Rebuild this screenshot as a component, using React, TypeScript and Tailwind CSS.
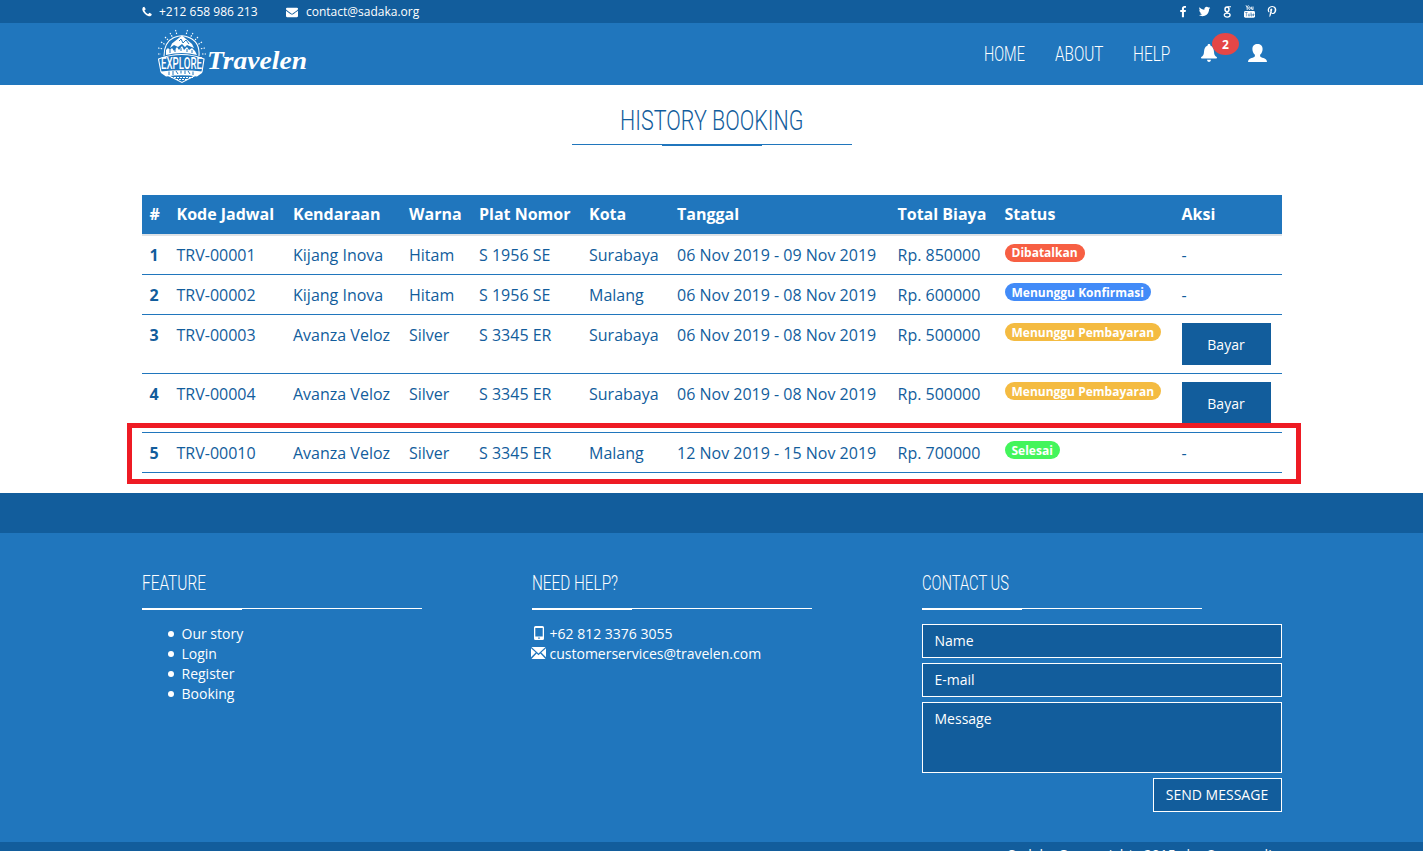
import type { ReactNode } from "react";

type Booking = {
  code: string;
  car: string;
  color: string;
  plate: string;
  city: string;
  date: string;
  total: string;
  status: keyof typeof badgeColor;
  payable?: boolean;
};

const badgeColor = {
  Dibatalkan: "bg-[#f75f43] w-20",
  "Menunggu Konfirmasi": "bg-[#428bf8] w-[146px]",
  "Menunggu Pembayaran": "bg-[#f4bb41] w-[156px]",
  Selesai: "bg-[#43f55b] w-[55px]",
};

const bookings: Booking[] = [
  { code: "TRV-00001", car: "Kijang Inova", color: "Hitam", plate: "S 1956 SE", city: "Surabaya", date: "06 Nov 2019 - 09 Nov 2019", total: "Rp. 850000", status: "Dibatalkan" },
  { code: "TRV-00002", car: "Kijang Inova", color: "Hitam", plate: "S 1956 SE", city: "Malang", date: "06 Nov 2019 - 08 Nov 2019", total: "Rp. 600000", status: "Menunggu Konfirmasi" },
  { code: "TRV-00003", car: "Avanza Veloz", color: "Silver", plate: "S 3345 ER", city: "Surabaya", date: "06 Nov 2019 - 08 Nov 2019", total: "Rp. 500000", status: "Menunggu Pembayaran", payable: true },
  { code: "TRV-00004", car: "Avanza Veloz", color: "Silver", plate: "S 3345 ER", city: "Surabaya", date: "06 Nov 2019 - 08 Nov 2019", total: "Rp. 500000", status: "Menunggu Pembayaran", payable: true },
  { code: "TRV-00010", car: "Avanza Veloz", color: "Silver", plate: "S 3345 ER", city: "Malang", date: "12 Nov 2019 - 15 Nov 2019", total: "Rp. 700000", status: "Selesai" },
];

const headings = ["#", "Kode Jadwal", "Kendaraan", "Warna", "Plat Nomor", "Kota", "Tanggal", "Total Biaya", "Status", "Aksi"];
const columns = "grid grid-cols-[27px_116.5px_116px_70px_110px_88px_220.5px_107px_177px_108px] whitespace-nowrap";

function Glyph({ d, className }: { d: string; className: string }) {
  return (
    <svg viewBox="0 0 1792 1792" fill="currentColor" className={className}>
      <path d={d} />
    </svg>
  );
}

const phonePath =
  "M1600 1240q0 27-10 70.5t-21 68.5q-21 50-122 106-94 51-186 51-27 0-53-3.5t-57.5-12.5-47-14.5-55.5-20.5-49-18q-98-35-175-83-127-79-264-216t-216-264q-48-77-83-175-3-9-18-49t-20.5-55.5-14.5-47-12.5-57.5-3.5-53q0-92 51-186 56-101 106-122 25-11 68.5-21t70.5-10q14 0 21 3 18 6 53 76 11 19 30 54t35 63.5 31 53.5q3 4 17.5 25t21.5 35.5 7 28.5q0 20-28.5 50t-62 55-62 53-28.5 46q0 9 5 22.5t8.5 20.5 14 24 11.5 19q76 137 174 235t235 174q2 1 19 11.5t24 14 20.5 8.5 22.5 5q18 0 46-28.5t53-62 55-62 50-28.5q14 0 28.5 7t35.5 21.5 25 17.5q25 15 53.5 31t63.5 35 54 30q70 35 76 53 3 7 3 21z";
const envelopePath =
  "M1792 710v794q0 66-47 113t-113 47h-1472q-66 0-113-47t-47-113v-794q44 49 101 87 362 246 497 345 57 42 92.5 65.5t94.5 48 110 24.5h2q51 0 110-24.5t94.5-48 92.5-65.5q170-123 498-345 57-39 100-87zm0-294q0 79-49 151t-122 123q-376 261-468 325-10 7-42.5 31t-54 38.5-52 32.5-57.5 27-50 9h-2q-23 0-50-9t-57.5-27-52-32.5-54-38.5-42.5-31q-91-64-262-182.5t-205-142.5q-62-42-117-115.5t-55-136.5q0-78 41.5-130t118.5-52h1472q65 0 112.5 47t47.5 113z";
const facebookPath =
  "M1343 12v264h-157q-86 0-116 36t-30 108v189h293l-39 296h-254v759h-306v-759h-255v-296h255v-218q0-186 104-288.5t277-102.5q147 0 228 12z";
const twitterPath =
  "M1684 408q-67 98-162 167 1 14 1 42 0 130-38 259.5t-115.5 248.5-184.5 210.5-258 146-323 54.5q-271 0-496-145 35 4 78 4 225 0 401-138-105-2-188-64.5t-114-159.5q33 5 61 5 43 0 85-11-112-23-185.5-111.5t-73.5-205.5v-4q68 38 146 41-66-44-105-115t-39-154q0-88 44-163 121 149 294.5 238.5t371.5 99.5q-8-38-8-74 0-134 94.5-228.5t228.5-94.5q140 0 236 102 109-21 205-78-37 115-142 178 93-10 186-50z";
const pinterestPath =
  "M256 597q0-108 37.5-203.5t103.5-166.5 152-123 185-78 202-26q158 0 294 66.5t221 193.5 85 287q0 96-19 188t-60 177-100 149.5-145 103-189 38.5q-68 0-135-32t-96-88q-10 39-28 112.5t-23.5 95-20.5 71-26 71-32 62.5-46 77.5-62 86.5l-14 5-9-10q-15-157-15-188 0-92 21.5-206.5t66.5-287.5 52-203q-32-65-32-169 0-83 52-156t132-73q61 0 95 40.5t34 102.5q0 66-44 191t-44 187q0 63 45 104.5t109 41.5q55 0 102-25t78.5-68 56-95 38-110.5 20-111 6.5-99.5q0-173-109.5-269.5t-285.5-96.5q-200 0-334 129.5t-134 328.5q0 44 12.5 85t27 65 27 45.5 12.5 30.5q0 28-15 73t-37 45q-2 0-17-3-51-15-90.5-56t-61-94.5-32.5-108-11-106.5z";

function GoogleIcon() {
  return (
    <svg viewBox="0 0 9 12" className="h-3 w-[9px]" fill="none" stroke="currentColor">
      <ellipse cx="4" cy="3.3" rx="2" ry="2.4" strokeWidth="1.5" />
      <path d="M4.5 .7H8M4.2 5.6Q3 6.5 5 7.1" strokeWidth="1.1" />
      <ellipse cx="4.2" cy="9.1" rx="2.9" ry="2" strokeWidth="1.3" />
    </svg>
  );
}

function YoutubeIcon() {
  return (
    <svg viewBox="0 0 11 13" className="h-[13px] w-[11px]" fill="none" stroke="currentColor">
      <path d="M2 .3 3.2 2.5 4.4 .3M3.2 2.3V4.9M7.4 1.7V4.1Q7.8 4.9 9 4M9 1.5V4.8" strokeWidth=".9" />
      <ellipse cx="5.5" cy="3.2" rx=".8" ry="1.3" strokeWidth=".9" />
      <rect x="0" y="6" width="11" height="6.7" rx="1.4" fill="currentColor" stroke="none" />
      <path d="M1.2 7.5H3.6M2.4 7.5V11.3M4.4 8.8V10.9H5.8V8.6M7 7.3V11H8V9.1H7M10 10.6H9V9H10V9.9H9" stroke="#125d9c" strokeWidth=".5" />
    </svg>
  );
}

function BellIcon() {
  return (
    <svg viewBox="0 0 16 18" className="h-[18px] w-4" fill="currentColor">
      <path d="M8 0C9 0 9.5.7 9.5 1.7 12 2.5 12.8 4.8 13 8c.2 3 1.100 4 2.700 5.100.5.5.3 1.400-.5 1.400H.8c-.8 0-1-.9-.5-1.400C1.900 12 2.800 11 3 8c.2-3.200 1-5.500 3.500-6.300C6.500.7 7 0 8 0ZM6 15.800h4C9.700 17.200 9 18 8 18s-1.700-.8-2-2.200Z" />
    </svg>
  );
}

function UserIcon() {
  return (
    <svg viewBox="0 0 19 18" className="h-[18px] w-[19px]" fill="currentColor">
      <path d="M9.500 0C12.500 0 14.600 1.800 14.600 5c0 2.300-1 4.600-2.500 5.800v1.400c.4.800 1.600 1.200 3.400 1.900 2.400.9 3.300 1.600 3.500 3.900H0c.2-2.300 1.100-3 3.500-3.900 1.800-.7 3-1.100 3.400-1.900v-1.400C5.400 9.600 4.400 7.300 4.400 5c0-3.200 2.100-5 5.100-5Z" />
    </svg>
  );
}

function LogoMark() {
  return (
    <svg viewBox="0 0 50 56" className="h-14 w-[50px] shrink-0 overflow-visible" fill="none" stroke="white">
      <path d="M13 5 16 10M8 9l4 4M4 14l4 2.500M1 20l5 1M18.500 2 20 7M30.500 2 29 7M36 5 33 10M41 9l-4 4M45 14l-4 2.500M48 20l-5 1M1 26H4M45 26H49" strokeWidth="1.100" strokeDasharray="1.500 1.200" />
      <path d="M7 28Q7 14 17 9.500Q25 6 32 9.500Q43 14 42 28" strokeWidth="1.100" />
      <path d="M15 15.500 25 7.500 35 16 37 20 30 17 28 19 25 16 21 19 17 17 13 20Z" fill="white" stroke="none" />
      <path d="M9 27V22L11 20 13 22 15 20 17 23 20 19 22 22 25 18 27 22 30 19 32 22 35 20 38 23 40 27Q25 23 9 27Z" fill="white" stroke="none" />
      <path d="M22 13 24 11 26 15 29 12 32 16M13 22V25M18 21V24M24 20V23M30 21V24M35 22V25" stroke="#2076bd" strokeWidth="1" />
      <path d="M1.500 31Q25 22 47 31L45 44 25 54.500 4 44Z" fill="#2076bd" strokeWidth="1.100" />
      <text x="4" y="41" fontFamily="Roboto, sans-serif" fontSize="17" fontWeight="500" fill="white" stroke="none" textLength="41" lengthAdjust="spacingAndGlyphs">EXPLORE</text>
      <path d="M4 43.500Q25 41 45 43.500V45L40 48.500Q25 46 9 48.500L4 45Z" fill="white" stroke="none" />
      <path d="M12 43.500V47M16 43V47M19 43 21 46M24 42.500V45.500M28 42.500V46M31 43 33 46M36 43.500V47" stroke="#2076bd" strokeWidth="1" />
      <path d="M14 49.500H36M19 51.500H31" strokeWidth="1" strokeDasharray="2 1" />
    </svg>
  );
}

function FooterColumn({ title, children }: { title: ReactNode; children: ReactNode }) {
  return (
    <section className="w-[360px]">
      <div className="h-[35px] font-['Roboto'] text-[20px] leading-5 font-[350] whitespace-nowrap">{title}</div>
      <div className="h-4 w-[280px] border-t border-white">
        <div className="h-px w-[100px] bg-white" />
      </div>
      {children}
    </section>
  );
}

export default function App() {
  return (
    <div className="relative h-[851px] w-[1423px] overflow-hidden bg-white font-['Open_Sans',sans-serif] text-[#125d9c]">
      <div className="h-[23px] bg-[#125d9c] text-white">
        <div className="mx-auto flex h-full w-[1140px] items-center justify-between text-[12px]">
          <div className="flex items-center">
            <Glyph d={phonePath} className="-ml-px size-3" />
            <span className="ml-[6.5px] w-[99px] whitespace-nowrap">+212 658 986 213</span>
            <Glyph d={envelopePath} className="ml-7 size-3" />
            <span className="ml-2">contact@sadaka.org</span>
          </div>
          <div className="mr-1 flex items-center">
            <Glyph d={facebookPath} className="size-[12px]" />
            <Glyph d={twitterPath} className="ml-[9px] size-[13px]" />
            <span className="ml-3"><GoogleIcon /></span>
            <span className="ml-3"><YoutubeIcon /></span>
            <Glyph d={pinterestPath} className="ml-[11px] size-3" />
          </div>
        </div>
      </div>

      <header className="h-[62px] bg-[#2076bd] text-white">
        <div className="mx-auto flex h-full w-[1140px] items-start">
          <div className="flex items-start pt-[5px] pl-[15px]">
            <LogoMark />
            <svg viewBox="0 0 106 38" className="mt-4 h-[38px] w-[106px] shrink-0 overflow-visible">
              <text x="0" y="25" fill="white" fontFamily="Liberation Serif, serif" fontWeight="700" fontStyle="italic" fontSize="26" textLength="100" lengthAdjust="spacingAndGlyphs">Travelen</text>
            </svg>
          </div>
          <nav className="ml-auto flex items-start pt-[18px] pr-[15px] font-['Roboto'] text-[20px] leading-6 font-[350]">
            <a className="mt-px w-[71px]"><span className="inline-block origin-left scale-x-[.725]">HOME</span></a>
            <a className="mt-px w-[78px]"><span className="inline-block origin-left scale-x-[.765]">ABOUT</span></a>
            <a className="mt-px w-[68px]"><span className="inline-block origin-left scale-x-[.77]">HELP</span></a>
            <span className="relative mt-[3px] w-[47px]">
              <BellIcon />
              <span className="absolute -top-[11px] left-[11px] flex h-[22px] w-[27px] items-center justify-center rounded-[50%] bg-[#e44747] pt-px pl-px font-['Open_Sans'] text-[12px] font-bold">2</span>
            </span>
            <span className="mt-[3px]"><UserIcon /></span>
          </nav>
        </div>
      </header>

      <main className="mx-auto h-[408px] w-[1140px]">
        <div className="flex h-[110px] flex-col items-center pt-5">
          <h1 className="h-[39px] w-[183px] font-['Roboto'] text-[28px] leading-8 font-[350] whitespace-nowrap">
            <span className="inline-block origin-left scale-x-[.767]">HISTORY BOOKING</span>
          </h1>
          <div className="w-[280px] border-t border-[#2076bd]">
            <div className="ml-[90px] h-px w-[100px] bg-[#2076bd]" />
          </div>
        </div>
        <div className={`${columns} h-[41px] border-b-2 border-[#dee2e6] bg-[#2076bd] text-[16px] leading-[38px] font-bold text-white`}>
          {headings.map((h) => <div key={h} className="pl-2">{h}</div>)}
        </div>
        {bookings.map((b, i) => (
          <div key={b.code} className={`${columns} border-b border-[#2076bd] text-[16px] leading-6 ${b.payable ? "h-[59px]" : i === 0 ? "h-[39px]" : "h-10"} ${i === 0 ? "pt-[7px]" : "pt-2"}`}>
            <div className="pl-2 font-bold">{i + 1}</div>
            {[b.code, b.car, b.color, b.plate, b.city, b.date, b.total].map((value) => <div key={value} className="pl-2">{value}</div>)}
            <div className="pl-2">
              <span className={`${badgeColor[b.status]} ${i === 0 ? "mt-px leading-[18px]" : "leading-5"} block h-[18px] rounded-full pl-[7px] text-[12px] font-bold text-white`}>{b.status}</span>
            </div>
            <div className="pl-2">
              {b.payable ? <button className="block h-[42px] w-[89px] bg-[#125d9c] pt-0.5 text-[14px] text-white">Bayar</button> : "-"}
            </div>
          </div>
        ))}
      </main>

      <div className="absolute top-[423px] left-[127px] h-[61px] w-[1174px] border-[5px] border-[#ee1b24]" />

      <div className="h-10 bg-[#125d9c]" />
      <footer className="h-[309px] bg-[#2076bd] pt-10 text-[14px] leading-5 text-white">
        <div className="mx-auto flex w-[1140px] justify-between">
          <FooterColumn title={<span className="inline-block origin-left scale-x-[.77]">FEATURE</span>}>
            <ul className="pl-[26.5px]">
              {["Our story", "Login", "Register", "Booking"].map((item) => (
                <li key={item} className="flex items-center">
                  <span className="mr-[7.5px] size-1.5 rounded-full bg-white" />
                  {item}
                </li>
              ))}
            </ul>
          </FooterColumn>
          <FooterColumn title={<span className="inline-block origin-left scale-x-[.765]">NEED HELP?</span>}>
            <div className="flex items-center">
              <svg viewBox="0 0 14 14" className="-mt-0.5 mr-1 size-[14px]" fill="currentColor">
                <path fillRule="evenodd" d="M3.500 0h7q1.500 0 1.500 1.500v11q0 1.500-1.500 1.500h-7Q2 14 2 12.500v-11Q2 0 3.500 0ZM3.300 2v8.500h7.400V2ZM6.200 11.500v1.200h1.600v-1.200Z" />
              </svg>
              +62 812 3376 3055
            </div>
            <div className="flex items-center">
              <svg viewBox="0 0 15 12" className="-mt-0.5 -ml-px mr-1 h-3 w-[15px]" fill="currentColor">
                <path d="M.5 0h14L7.500 6.500ZM0 1.200 4.700 5.600 0 10.200ZM15 1.200 10.300 5.600 15 10.200ZM.5 12 5.600 6.500 7.500 8.200 9.400 6.500 14.500 12Z" />
              </svg>
              customerservices@travelen.com
            </div>
          </FooterColumn>
          <FooterColumn title={<span className="inline-block origin-left scale-x-[.735]">CONTACT US</span>}>
            <form className="flex flex-col gap-[5px]">
              <input placeholder="Name" className="h-[34px] border border-white bg-[#125d9c] px-3 pb-0.5 text-white placeholder:text-white" />
              <input placeholder="E-mail" className="h-[34px] border border-white bg-[#125d9c] px-3 pb-0.5 text-white placeholder:text-white" />
              <textarea placeholder="Message" className="h-[71px] resize-none border border-white bg-[#125d9c] px-3 py-1.5 text-white placeholder:text-white" />
              <button type="button" className="h-[34px] w-[129px] self-end border border-white bg-[#125d9c] whitespace-nowrap">SEND MESSAGE</button>
            </form>
          </FooterColumn>
        </div>
      </footer>
      <div className="h-10 bg-[#125d9c]">
        <div className="mx-auto w-[1140px] pt-[3px] pr-0.5 text-right text-[14px] leading-5 text-white">Sadaka Copy - rights 2015 , by Ouarmedia</div>
      </div>
    </div>
  );
}
